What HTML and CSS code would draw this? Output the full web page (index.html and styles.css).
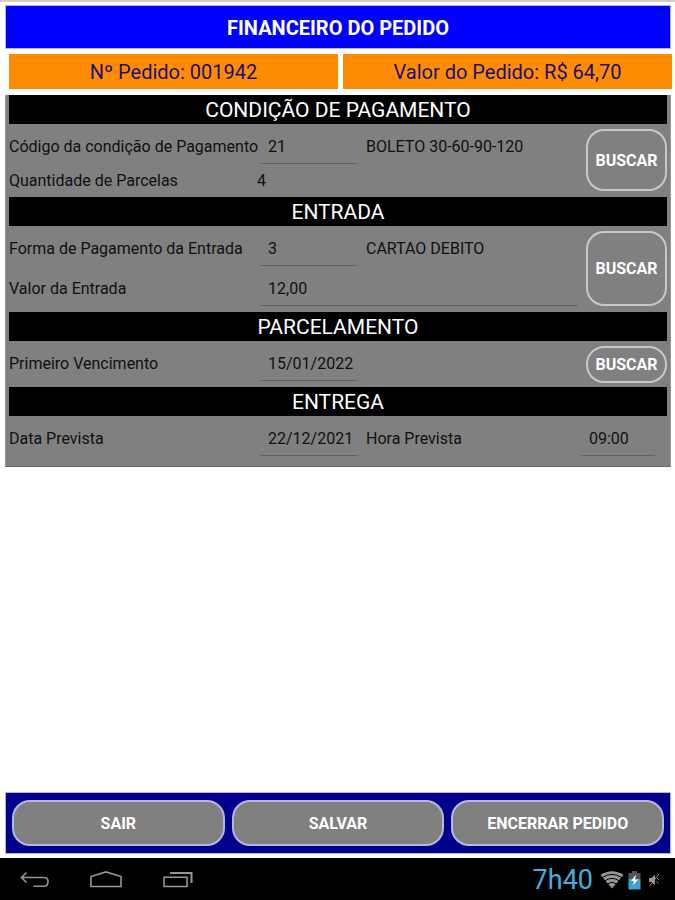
FILE: index.html
```html
<!DOCTYPE html>
<html lang="pt-BR">
<head>
    <meta charset="UTF-8">
    <meta name="viewport" content="width=device-width, initial-scale=1.0">
    <title>Financeiro do Pedido</title>
    <link rel="stylesheet" href="styles.css">
</head>
<body>
    <div class="tela">
        <h1 class="titulo">FINANCEIRO DO PEDIDO</h1>

        <div class="resumo">
            <div class="resumo-item"><span>Nº Pedido: 001942</span></div>
            <div class="resumo-item valor"><span>Valor do Pedido: R$ 64,70</span></div>
        </div>

        <div class="painel">
            <h2><span class="t-condicao">CONDIÇÃO DE PAGAMENTO</span></h2>
            <div class="secao condicao">
                <div class="campos">
                    <div class="linha">
                        <span class="rotulo">Código da condição de Pagamento</span>
                        <span class="campo">21</span>
                        <span class="descricao boleto">BOLETO 30-60-90-120</span>
                    </div>
                    <div class="linha">
                        <span class="rotulo">Quantidade de Parcelas</span>
                        <span class="parcelas">4</span>
                    </div>
                </div>
                <button class="buscar">BUSCAR</button>
            </div>

            <h2><span>ENTRADA</span></h2>
            <div class="secao entrada">
                <div class="campos">
                    <div class="linha">
                        <span class="rotulo">Forma de Pagamento da Entrada</span>
                        <span class="campo">3</span>
                        <span class="descricao cartao">CARTAO DEBITO</span>
                    </div>
                    <div class="linha">
                        <span class="rotulo">Valor da Entrada</span>
                        <span class="campo campo-largo">12,00</span>
                    </div>
                </div>
                <button class="buscar">BUSCAR</button>
            </div>

            <h2><span>PARCELAMENTO</span></h2>
            <div class="secao parcelamento">
                <div class="campos">
                    <div class="linha">
                        <span class="rotulo">Primeiro Vencimento</span>
                        <span class="campo">15/01/2022</span>
                    </div>
                </div>
                <button class="buscar">BUSCAR</button>
            </div>

            <h2><span>ENTREGA</span></h2>
            <div class="secao entrega">
                <div class="linha">
                    <span class="rotulo">Data Prevista</span>
                    <span class="campo">22/12/2021</span>
                    <span class="descricao">Hora Prevista</span>
                    <span class="campo hora">09:00</span>
                </div>
            </div>
        </div>

        <div class="acoes">
            <button>SAIR</button>
            <button>SALVAR</button>
            <button>ENCERRAR PEDIDO</button>
        </div>
    </div>

    <!-- Barra do sistema -->
    <div class="barra-sistema">
        <div class="navegacao">
            <svg width="30" height="18" viewBox="0 0 30 18">
                <path d="M6.5 1.5 L1.5 6.5 L6.5 11.5 M2 6.5 H24 Q28 6.5 28 10.5 Q28 15.3 24 15.3 H13.5"/>
            </svg>
            <svg width="34" height="18" viewBox="0 0 34 18">
                <path d="M2 15.5 V5.5 L17 .9 L32 5.5 V15.5 Z"/>
            </svg>
            <svg width="32" height="18" viewBox="0 0 32 18">
                <path d="M2 6.2 H25 V15.5 H2 Z"/>
                <path class="grosso" d="M8 2 H29.5 V12"/>
            </svg>
        </div>
        <div class="status">
            <span class="relogio">7h40</span>
            <svg class="wifi" width="24" height="18" viewBox="0 0 24 18">
                <path class="cheio" d="M12 17.5 L.5 4 Q12 -3.5 23.5 4 Z"/>
                <path class="corte" d="M2.2 6.6 Q12 .2 21.8 6.6 M4.8 9.8 Q12 5 19.2 9.8 M7.5 12.8 Q12 9.8 16.5 12.8"/>
            </svg>
            <svg class="bateria" width="13" height="19" viewBox="0 0 13 19">
                <path class="topo" d="M4 0 H9 V2 H12.5 V8 H.5 V2 H4 Z"/>
                <path class="carga" d="M.5 8 H12.5 V18.5 H.5 Z"/>
                <path class="raio" d="M8 3.5 L3 10 H6 L5 14.5 L10 8.5 H7 Z"/>
            </svg>
            <svg class="mudo" width="12" height="16" viewBox="0 0 12 16">
                <path class="cheio" d="M1 6 H3.5 L7 2.5 V13 L3.5 10 H1 Z"/>
                <path d="M1.5 14 L11 2 M9 6 L11 8 M8.5 9.5 L10.5 11.5"/>
            </svg>
        </div>
    </div>
</body>
</html>
```

FILE: styles.css
```css
* {
    box-sizing: border-box;
}

body {
    margin: 0;
    height: 900px;
    display: flex;
    flex-direction: column;
    background-color: white;
    font-family: Roboto, sans-serif;
    overflow: hidden;
}

.tela {
    height: 858px;
    display: flex;
    flex-direction: column;
    padding: 3px 3px 4px 5px;
    border-top: 2px solid #d0cdcb;
}

.titulo {
    width: 666px;
    height: 44px;
    margin: 0;
    background-color: #0000ff;
    border: 1px solid #b4b4f0;
    color: white;
    font-size: 20px;
    line-height: 44px;
    text-align: center;
}

.resumo {
    display: flex;
    gap: 5px;
    height: 35px;
    margin: 5px 0 0 4px;
}

.resumo-item {
    flex: 1;
    background-color: #ff8c00;
    color: #17107f;
    font-size: 20px;
    line-height: 37px;
    text-align: center;
}

.painel {
    width: 666px;
    height: 372px;
    margin-top: 6px;
    padding: 0 3px;
    background-color: #808080;
    border: 1px solid #999;
    border-top: none;
    border-bottom-color: #666;
}

h2 {
    height: 29px;
    margin: 0;
    background-color: black;
    color: white;
    font-size: 21px;
    font-weight: normal;
    line-height: 31px;
    text-align: center;
}

.secao {
    display: flex;
    justify-content: space-between;
    color: #101010;
    font-size: 16px;
}

.linha {
    display: flex;
    align-items: flex-start;
}

.rotulo {
    width: 251px;
    white-space: nowrap;
}

.campo {
    width: 97px;
    height: 27px;
    padding-left: 8px;
    border-bottom: 1px solid #626262;
}

.campo-largo {
    width: 318px;
}

.descricao {
    width: 224px;
    padding-left: 9px;
}

.hora {
    width: 74px;
}

.parcelas {
    margin-left: -3px;
}

.linha span {
    line-height: 20px;
}

.condicao {
    height: 73px;
    padding: 5px 0 6px;
}

.condicao .linha {
    height: 34px;
    padding-top: 8px;
}

.entrada {
    height: 86px;
    padding: 5px 0 6px;
}

.entrada .linha {
    height: 40px;
    padding-top: 8px;
}

.parcelamento {
    height: 46px;
    padding: 5px 0 4px;
}

.parcelamento .linha {
    padding-top: 8px;
}

.entrega {
    padding-top: 13px;
}

button {
    padding: 0;
    background-color: #808080;
    border: 2px solid #c8c8c8;
    color: white;
    font-family: inherit;
    font-size: 16px;
    font-weight: bold;
}

.buscar {
    width: 81px;
    border-radius: 18px;
}

.acoes {
    display: flex;
    gap: 7px;
    width: 666px;
    height: 62px;
    margin-top: auto;
    padding: 7px 6px;
    background-color: #00008b;
    border: 1px solid #b4b4e0;
}

.acoes button {
    flex: 1;
    border-color: #b8b8dc;
    border-radius: 18px;
}

.barra-sistema {
    height: 42px;
    display: flex;
    justify-content: space-between;
    align-items: center;
    padding: 2px 15px 0 20px;
    background-color: black;
}

.navegacao,
.status {
    display: flex;
    align-items: center;
}

.navegacao {
    gap: 39px;
}

svg path {
    fill: none;
    stroke: #969696;
    stroke-width: 1.6;
}

svg .grosso {
    stroke-width: 2;
}

svg .cheio {
    fill: #969696;
    stroke: none;
}

svg .corte {
    stroke: black;
    stroke-width: 1;
}

.relogio {
    margin-right: 7px;
    color: #45addb;
    font-size: 27px;
}

.bateria {
    margin: 0 7px 0 4px;
}

svg .topo {
    fill: #555;
    stroke: none;
}

svg .carga {
    fill: #3ba2cc;
    stroke: none;
}

svg .raio {
    fill: white;
    stroke: none;
}

.mudo path {
    stroke-width: 1;
}
```
